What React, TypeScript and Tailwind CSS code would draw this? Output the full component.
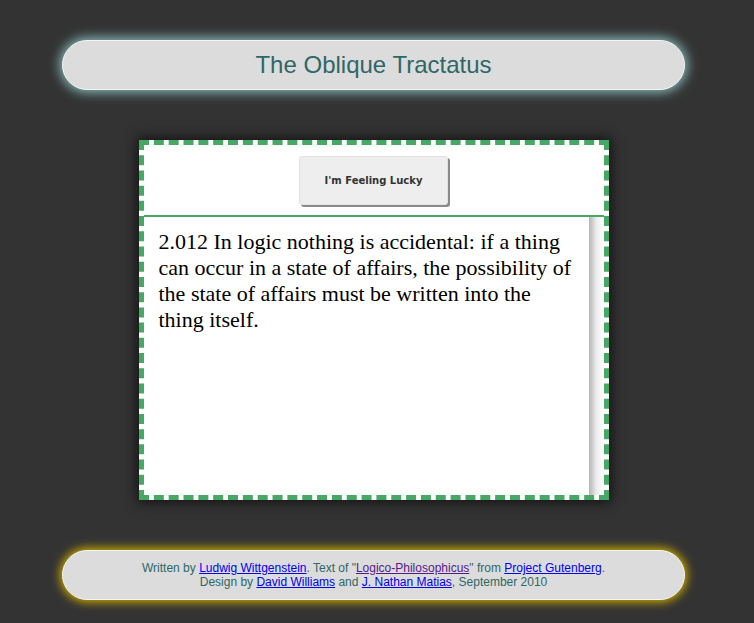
export default function App() {
  return (
    <div className="min-h-[623px] bg-[#333333] overflow-hidden">
      <div className="w-[747px] pt-[40px] pb-[23px]">
        <header className="mx-auto w-[623px] h-[50px] rounded-[25px] border border-[#f4f4f4] bg-[#dcdcdc] shadow-[0_0_12px_2px_#8fc4c4] flex items-center justify-center">
          <h1 className="font-['Liberation_Sans',Arial,sans-serif] text-[24px] text-[#2f6767]">
            The Oblique Tractatus
          </h1>
        </header>

        <main className="mx-auto mt-[50px] w-[470px] h-[360px] border-[5px] border-dashed border-[#47a865] bg-white shadow-[0_0_12px_2px_#111] flex flex-col">
          <div className="h-[72px] pt-[11px] flex justify-center border-b-2 border-[#47a865]">
            <button className="w-[149px] h-[49px] rounded-[3px] bg-[#eeeeee] border border-[#e2e2e2] shadow-[2px_2px_0_#8a8a8a] font-['DejaVu_Sans',sans-serif] font-bold text-[10px] text-[#333]">
              I'm Feeling Lucky
            </button>
          </div>
          <div className="flex-1 flex min-h-0">
            <p className="flex-1 pl-[15px] pr-[14px] pt-[12px] font-['Liberation_Serif','Times_New_Roman',serif] text-[22px] leading-[26px] text-black">
              2.012 In logic nothing is accidental: if a thing can occur in a state of affairs, the possibility of the state of affairs must be written into the thing itself.
            </p>
            <div className="w-[15px] bg-gradient-to-r from-[#b5b5b5] via-[#ededed] to-white" />
          </div>
        </main>

        <footer className="mx-auto mt-[50px] w-[623px] h-[50px] rounded-[25px] border border-[#f4f4f4] bg-[#dcdcdc] shadow-[0_0_10px_2px_#d0ae00] flex flex-col items-center justify-center font-['Liberation_Sans',Arial,sans-serif] text-[12px] leading-[14px] text-[#2f6767]">
          <div>
            Written by <a href="#" className="text-[#0000ee] underline">Ludwig Wittgenstein</a>. Text of "<a href="#" className="text-[#551a8b] underline">Logico-Philosophicus</a>" from <a href="#" className="text-[#0000ee] underline">Project Gutenberg</a>.
          </div>
          <div>
            Design by <a href="#" className="text-[#0000ee] underline">David Williams</a> and <a href="#" className="text-[#0000ee] underline">J. Nathan Matias</a>, September 2010
          </div>
        </footer>
      </div>
    </div>
  );
}
